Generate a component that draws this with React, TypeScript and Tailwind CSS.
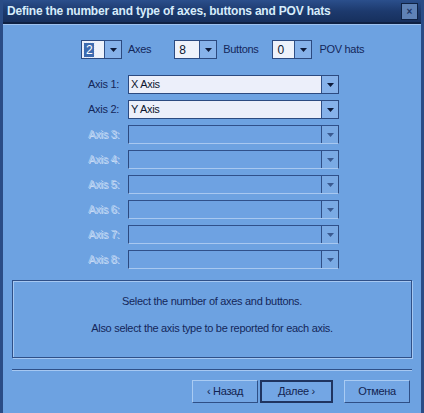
import React from "react";

const font = { fontFamily: '"Liberation Sans", Arial, sans-serif' };

const Arrow = ({ disabled }: { disabled?: boolean }) => (
  <div
    className={`flex w-[17px] h-full items-center justify-center border-l border-[#2f4f86] ${
      disabled ? "bg-[#7aaae4]" : "bg-[#86b2ea]"
    }`}
  >
    <svg width="7" height="4" viewBox="0 0 7 4">
      <polygon points="0,0 7,0 3.5,4" fill={disabled ? "#3a5a90" : "#0d1a3a"} />
    </svg>
  </div>
);

const SmallCombo = ({
  value,
  width,
  selected,
}: {
  value: string;
  width: string;
  selected?: boolean;
}) => (
  <div className={`flex h-[19px] ${width} border border-[#2c4a80] bg-[#eef2fb]`}>
    <div className="flex flex-1 items-center px-[2px]">
      <span
        className={`px-[2px] leading-[14px] text-[12px] ${
          selected ? "bg-[#3d6bb0] text-white outline outline-1 outline-dotted outline-[#dfe8f8]" : "text-[#0c1630]"
        }`}
      >
        {value}
      </span>
    </div>
    <Arrow />
  </div>
);

const AxisRow = ({
  n,
  value,
  enabled,
}: {
  n: number;
  value?: string;
  enabled?: boolean;
}) => (
  <div className="flex h-[19px] items-center">
    <div
      className={`w-[118px] pr-[2px] text-right text-[11px] tracking-[-0.3px] ${
        enabled ? "text-[#14275a]" : "text-[#a9c8ef] [text-shadow:1px_1px_0_#c9dcf5]"
      }`}
    >
      Axis {n}:
    </div>
    <div className="ml-[7px] w-[211px]">
      <div
        className={`flex h-[19px] border border-[#2c4a80] ${
          enabled ? "bg-[#eceffa]" : "bg-[#6ea2e2] border-t-[#30508a] border-b-[#a8c8f0]"
        }`}
      >
        <div className="flex flex-1 items-center px-[2px] text-[11px] tracking-[-0.3px] text-[#0c1630]">{value}</div>
        <Arrow disabled={!enabled} />
      </div>
    </div>
  </div>
);

const Button = ({ label, primary }: { label: string; primary?: boolean }) => (
  <div
    className={`flex h-[23px] items-center justify-center text-[11px] tracking-[-0.3px] text-[#122350] bg-[#73a6e4] ${
      primary
        ? "w-[73px] border-2 border-[#1f3460]"
        : "w-[66px] border border-t-[#a9cbf3] border-l-[#a9cbf3] border-r-[#2f4f86] border-b-[#2f4f86]"
    }`}
  >
    {label}
  </div>
);

export default function App() {
  return (
    <div
      className="flex h-[413px] w-[424px] flex-col overflow-hidden bg-[#6da2e1] border-l-[3px] border-r-[3px] border-[#2a4c86]"
      style={font}
    >
      <div className="flex h-[22px] items-center justify-between bg-gradient-to-b from-[#2b4f8c] via-[#1d3a6e] to-[#17305d] pl-[4px] pr-[3px]">
        <span className="text-[12px] font-bold tracking-[-0.2px] text-[#d6ecfb]">
          Define the number and type of axes, buttons and POV hats
        </span>
        <div className="flex h-[17px] w-[17px] items-center justify-center border border-[#0f2244] bg-[#5f82b6] text-[10px] font-bold text-[#1b3464]">
          ×
        </div>
      </div>
      <div className="h-[2px] bg-[#0f2143]" />
      <div className="h-[1px] bg-[#9fc3f0]" />

      <div className="flex flex-1 flex-col">
        <div className="mt-[15px] flex h-[19px] items-center pl-[78px] text-[11px] tracking-[-0.3px] text-[#14275a]">
          <SmallCombo value="2" width="w-[41px]" selected />
          <span className="ml-[6px]">Axes</span>
          <div className="ml-[23px]">
            <SmallCombo value="8" width="w-[43px]" />
          </div>
          <span className="ml-[6px]">Buttons</span>
          <div className="ml-[14px]">
            <SmallCombo value="0" width="w-[40px]" />
          </div>
          <span className="ml-[7px]">POV hats</span>
        </div>

        <div className="mt-[16px] flex flex-col gap-[6px]">
          <AxisRow n={1} value="X Axis" enabled />
          <AxisRow n={2} value="Y Axis" enabled />
          <AxisRow n={3} />
          <AxisRow n={4} />
          <AxisRow n={5} />
          <AxisRow n={6} />
          <AxisRow n={7} />
          <AxisRow n={8} />
        </div>

        <div className="mx-[9px] mt-[11px] flex h-[78px] flex-col items-center border border-[#2f5088] pt-[12px] text-[11px] tracking-[-0.3px] text-[#14275a] shadow-[1px_1px_0_#a6c8f2,inset_1px_1px_0_#a6c8f2]">
          <div>Select the number of axes and buttons.</div>
          <div className="mt-[10px]">Also select the axis type to be reported for each axis.</div>
        </div>

        <div className="mx-[9px] mt-[11px] h-[1px] bg-[#2f5088]" />
        <div className="mx-[9px] h-[1px] bg-[#a6c8f2]" />

        <div className="mt-[9px] flex items-center pl-[189px]">
          <Button label="‹ Назад" />
          <div className="ml-[2px]">
            <Button label="Далее ›" primary />
          </div>
          <div className="ml-[11px]">
            <Button label="Отмена" />
          </div>
        </div>
      </div>
    </div>
  );
}
